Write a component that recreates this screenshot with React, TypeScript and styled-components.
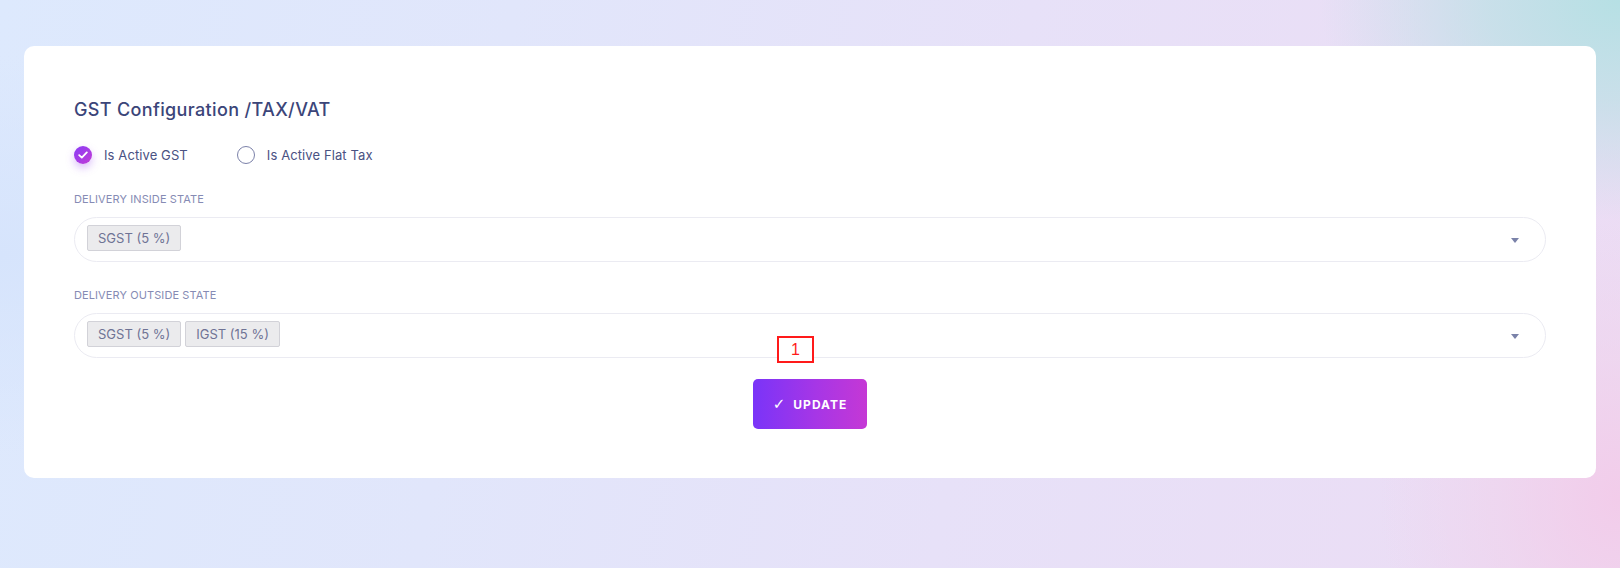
import React from "react";
import styled, { createGlobalStyle } from "styled-components";

const GlobalStyle = createGlobalStyle`
  html, body {
    margin: 0;
    padding: 0;
  }
  body {
    width: 1620px;
    height: 568px;
    overflow: hidden;
    font-family: "Inter", "Noto Sans", sans-serif;
    background:
      radial-gradient(ellipse 300px 220px at 100% 0%, rgba(182, 224, 228, 1) 0%, rgba(190, 224, 230, 0.75) 45%, rgba(200, 224, 235, 0) 100%),
      radial-gradient(ellipse 240px 280px at 100% 88%, rgba(242, 204, 234, 1) 0%, rgba(240, 210, 236, 0.6) 50%, rgba(240, 214, 238, 0) 100%),
      radial-gradient(ellipse 300px 200px at 0% 45%, rgba(214, 228, 252, 1) 0%, rgba(216, 230, 252, 0) 100%),
      linear-gradient(100deg, #dde9fd 0%, #e1e6fb 30%, #e7e1f8 60%, #ecdcf4 100%);
  }
`;

const Page = styled.div`
  padding: 46px 24px 0 24px;
`;

const Card = styled.section`
  position: relative;
  box-sizing: border-box;
  height: 432px;
  background: #ffffff;
  border-radius: 10px;
  padding: 50px 50px 49px 50px;
  display: flex;
  flex-direction: column;
`;

const Title = styled.h2`
  margin: 0;
  font-size: 18px;
  line-height: 27px;
  font-weight: 500;
  color: #3b4579;
  letter-spacing: 0.35px;
`;

const RadioRow = styled.div`
  display: flex;
  align-items: center;
  gap: 49px;
  margin-top: 23px;
  height: 18px;
`;

const RadioItem = styled.label`
  display: flex;
  align-items: center;
  gap: 12px;
  font-size: 13px;
  color: #4a5283;
  letter-spacing: 0.1px;
`;

const RadioDot = styled.span<{ $checked?: boolean }>`
  box-sizing: border-box;
  width: 18px;
  height: 18px;
  border-radius: 50%;
  display: flex;
  align-items: center;
  justify-content: center;
  border: ${(p) => (p.$checked ? "none" : "1px solid #7b81a9")};
  background: ${(p) =>
    p.$checked ? "linear-gradient(135deg, #8a3cf6 0%, #c23bd6 100%)" : "#ffffff"};
  box-shadow: ${(p) => (p.$checked ? "0 4px 8px rgba(150, 70, 240, 0.35)" : "none")};
`;

const FieldLabel = styled.div<{ $first?: boolean }>`
  margin-top: ${(p) => (p.$first ? "27px" : "25px")};
  font-size: 11px;
  line-height: 16px;
  color: #868bb4;
  text-transform: uppercase;
  letter-spacing: 0.1px;
`;

const Select = styled.div`
  box-sizing: border-box;
  margin-top: 10px;
  height: 45px;
  border: 1px solid #ebebf2;
  border-radius: 23px;
  padding: 7px 26px 0 12px;
  display: flex;
  align-items: flex-start;
`;

const Tags = styled.div`
  display: flex;
  gap: 4px;
  flex: 1;
`;

const Tag = styled.span`
  box-sizing: border-box;
  height: 26px;
  padding: 0 10px;
  display: inline-flex;
  align-items: center;
  background: #ebebed;
  border: 1px solid #d2d2d8;
  border-radius: 2px;
  font-size: 13px;
  color: #6f7395;
`;

const Caret = styled.span`
  align-self: center;
  margin-top: -6px;
  width: 0;
  height: 0;
  border-left: 4px solid transparent;
  border-right: 4px solid transparent;
  border-top: 5px solid #7a82a9;
`;

const ButtonRow = styled.div`
  display: flex;
  justify-content: center;
  margin-top: 21px;
`;

const UpdateButton = styled.button`
  box-sizing: border-box;
  width: 114px;
  height: 50px;
  border: none;
  border-radius: 5px;
  background: linear-gradient(90deg, #7a34f8 0%, #a636e6 55%, #c538d5 100%);
  color: #ffffff;
  font-family: "Inter", "Noto Sans", sans-serif;
  font-size: 12px;
  font-weight: 700;
  letter-spacing: 1px;
  display: flex;
  align-items: center;
  justify-content: center;
  gap: 8px;
  padding: 0;
`;

const CheckMark = styled.span`
  font-family: "DejaVu Sans", sans-serif;
  font-size: 15px;
  font-weight: 400;
  letter-spacing: 0;
`;

const Marker = styled.div`
  position: absolute;
  left: 753px;
  top: 290px;
  box-sizing: border-box;
  width: 37px;
  height: 27px;
  border: 2px solid #ff1a1a;
  background: #ffffff;
  color: #ff1a1a;
  font-family: "Liberation Sans", sans-serif;
  font-size: 16px;
  display: flex;
  align-items: center;
  justify-content: center;
`;

const Check = () => (
  <svg width="10" height="8" viewBox="0 0 10 8" fill="none">
    <path d="M1.2 4.2 L3.8 6.6 L8.8 1.4" stroke="#fff" strokeWidth="1.8" strokeLinecap="round" strokeLinejoin="round" />
  </svg>
);

export default function App() {
  return (
    <>
      <GlobalStyle />
      <Page>
        <Card>
          <Title>GST Configuration /TAX/VAT</Title>
          <RadioRow>
            <RadioItem>
              <RadioDot $checked>
                <Check />
              </RadioDot>
              Is Active GST
            </RadioItem>
            <RadioItem>
              <RadioDot />
              Is Active Flat Tax
            </RadioItem>
          </RadioRow>

          <FieldLabel $first>Delivery Inside State</FieldLabel>
          <Select>
            <Tags>
              <Tag>SGST (5 %)</Tag>
            </Tags>
            <Caret />
          </Select>

          <FieldLabel>Delivery Outside State</FieldLabel>
          <Select>
            <Tags>
              <Tag>SGST (5 %)</Tag>
              <Tag>IGST (15 %)</Tag>
            </Tags>
            <Caret />
          </Select>

          <ButtonRow>
            <UpdateButton>
              <CheckMark>✓</CheckMark>
              UPDATE
            </UpdateButton>
          </ButtonRow>

          <Marker>1</Marker>
        </Card>
      </Page>
    </>
  );
}
